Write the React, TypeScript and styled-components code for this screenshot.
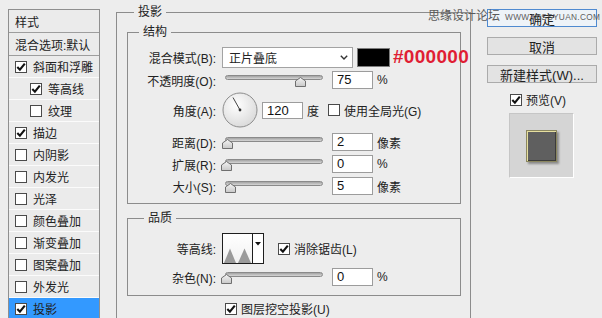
import React from "react";
import styled, { createGlobalStyle } from "styled-components";

const GlobalStyle = createGlobalStyle`
  html, body {
    margin: 0;
    padding: 0;
    background: #ededed;
  }
  body {
    font-family: "Liberation Sans", "Noto Sans CJK SC", sans-serif;
    font-size: 12px;
    color: #222;
  }
`;

type Effect = {
  name: string
  checked?: boolean
  sub?: boolean
  active?: boolean
}

const effects: Effect[] = [
  { name: "斜面和浮雕", checked: true },
  { name: "等高线", checked: true, sub: true },
  { name: "纹理", sub: true },
  { name: "描边", checked: true },
  { name: "内阴影" },
  { name: "内发光" },
  { name: "光泽" },
  { name: "颜色叠加" },
  { name: "渐变叠加" },
  { name: "图案叠加" },
  { name: "外发光" },
  { name: "投影", checked: true, active: true },
]

const Check = ({ checked }: { checked?: boolean }) => (
  <CheckBox>
    {checked && (
      <svg width="10" height="10" viewBox="0 0 10 10">
        <path d="M1.3 5 L3.9 7.7 L8.8 1.6" fill="none" stroke="#111" strokeWidth="2.1" />
      </svg>
    )}
  </CheckBox>
)

const Slider = ({ pos }: { pos: number }) => (
  <SliderWrap>
    <Track />
    <Thumb style={{ left: 1 + pos * 0.987 - 5.5 }}>
      <svg width="11" height="10" viewBox="0 0 11 10">
        <defs>
          <linearGradient id="thumbFill" x1="0" y1="0" x2="0" y2="1">
            <stop offset="0" stopColor="#f4f4f4" />
            <stop offset="1" stopColor="#c8c8c8" />
          </linearGradient>
        </defs>
        <polygon points="0.5,4 5.5,0.5 10.5,4 10.5,9.5 0.5,9.5" fill="url(#thumbFill)" stroke="#6f6f6f" />
      </svg>
    </Thumb>
  </SliderWrap>
)

const Dial = () => (
  <svg width="36" height="36" viewBox="0 0 36 36">
    <defs>
      <radialGradient id="dialFill" cx="0.4" cy="0.35" r="0.7">
        <stop offset="0" stopColor="#ffffff" />
        <stop offset="1" stopColor="#d9d9d9" />
      </radialGradient>
    </defs>
    <circle cx="18" cy="18" r="17" fill="url(#dialFill)" stroke="#8d8d8d" />
    <line x1="18" y1="18" x2="11" y2="5.5" stroke="#444" strokeWidth="1" />
    <circle cx="18" cy="18" r="1.4" fill="#333" />
  </svg>
)

const ContourPicker = () => (
  <ContourBox>
    <ContourCurve>
      <svg width="29" height="29" viewBox="0 0 29 29">
        <polygon points="1,29 7,14.5 13,29" fill="#9a9a9a" />
        <polygon points="15,29 21.5,14.5 28,29" fill="#9a9a9a" />
      </svg>
    </ContourCurve>
    <ContourArrow>
      <svg width="6" height="4" viewBox="0 0 6 4">
        <polygon points="0,0 6,0 3,3.5" fill="#111" />
      </svg>
    </ContourArrow>
  </ContourBox>
)

export default function App() {
  return (
    <Page>
      <GlobalStyle />
      <StylePanel>
        <PanelHeader>样式</PanelHeader>
        <PanelHeader>混合选项:默认</PanelHeader>
        {effects.map(effect => (
          <EffectRow key={effect.name} $sub={effect.sub} $active={effect.active}>
            <Check checked={effect.checked} />
            <EffectName>{effect.name}</EffectName>
          </EffectRow>
        ))}
      </StylePanel>

      <Group>
        <Legend $indent={7}>投影</Legend>
        <SubGroup>
          <Legend $indent={11}>结构</Legend>
          <Rows $top={6} $bottom={7}>
            <Row $h={22}>
              <Label>混合模式(B):</Label>
              <Select>
                <span>正片叠底</span>
                <svg width="8" height="5" viewBox="0 0 8 5">
                  <path d="M0.8 0.8 L4 4 L7.2 0.8" fill="none" stroke="#333" strokeWidth="1.4" />
                </svg>
              </Select>
              <Swatch />
              <HexCode>#000000</HexCode>
            </Row>
            <Row $h={20}>
              <Label>不透明度(O):</Label>
              <Slider pos={75} />
              <ValueInput>75</ValueInput>
              <Unit>%</Unit>
            </Row>
            <Row $h={36} $after={2}>
              <Label>角度(A):</Label>
              <Dial />
              <ValueInput $gap={4} $h={17}>120</ValueInput>
              <Unit>度</Unit>
              <OptionGap $w={9} />
              <Check />
              <OptionText>使用全局光(G)</OptionText>
            </Row>
            <Row $h={20}>
              <Label>距离(D):</Label>
              <Slider pos={2} />
              <ValueInput>2</ValueInput>
              <Unit>像素</Unit>
            </Row>
            <Row $h={20}>
              <Label>扩展(R):</Label>
              <Slider pos={0} />
              <ValueInput>0</ValueInput>
              <Unit>%</Unit>
            </Row>
            <Row $h={20}>
              <Label>大小(S):</Label>
              <Slider pos={4.6} />
              <ValueInput>5</ValueInput>
              <Unit>像素</Unit>
            </Row>
          </Rows>
        </SubGroup>

        <SubGroup $top={6}>
          <Legend $indent={16}>品质</Legend>
          <Rows $top={7} $bottom={8} $gap={3}>
            <Row $h={31}>
              <Label>等高线:</Label>
              <ContourPicker />
              <OptionGap $w={14} />
              <Check checked />
              <OptionText>消除锯齿(L)</OptionText>
            </Row>
            <Row $h={20}>
              <Label>杂色(N):</Label>
              <Slider pos={0} />
              <ValueInput>0</ValueInput>
              <Unit>%</Unit>
            </Row>
          </Rows>
        </SubGroup>

        <KnockoutRow>
          <Check checked />
          <OptionText>图层挖空投影(U)</OptionText>
        </KnockoutRow>
      </Group>

      <ActionPanel>
        <Button $primary>确定</Button>
        <Button>取消</Button>
        <Button>新建样式(W)...</Button>
        <PreviewToggle>
          <Check checked />
          <OptionText>预览(V)</OptionText>
        </PreviewToggle>
        <PreviewBox>
          <PreviewSquare />
        </PreviewBox>
      </ActionPanel>

      <Watermark>
        <WatermarkTitle>思缘设计论坛</WatermarkTitle>
        <WatermarkUrl>WWW.MISSYUAN.COM</WatermarkUrl>
      </Watermark>
    </Page>
  )
}

const Page = styled.div`
  position: relative;
  display: flex;
  align-items: flex-start;
  width: 602px;
  height: 318px;
  overflow: hidden;
  background: #ededed;
`

const StylePanel = styled.div`
  display: flex;
  flex-direction: column;
  flex: none;
  width: 92px;
  margin: 9px 0 0 8px;
  box-sizing: border-box;
  border: 1px solid #8f8f8f;
  border-bottom: none;
  background: #ebebeb;
`

const PanelHeader = styled.div`
  display: flex;
  align-items: center;
  height: 23px;
  padding-left: 6px;
  box-sizing: border-box;
  border-bottom: 1px solid #9d9d9d;
  white-space: nowrap;
`

const EffectRow = styled.div<{ $sub?: boolean, $active?: boolean }>`
  display: flex;
  align-items: center;
  height: 22px;
  padding-left: ${({ $sub }) => $sub ? 21 : 6}px;
  box-sizing: border-box;
  border-bottom: 1px solid ${({ $active }) => $active ? "#3399ff" : "#fbfbfb"};
  background: ${({ $active }) => $active ? "#3399ff" : "transparent"};
`

const EffectName = styled.span`
  margin-left: 6px;
  white-space: nowrap;
`

const CheckBox = styled.span`
  display: inline-flex;
  align-items: center;
  justify-content: center;
  flex: none;
  width: 12px;
  height: 12px;
  box-sizing: border-box;
  border: 1px solid #4a4a4a;
  background: #fff;
`

const Group = styled.fieldset`
  flex: none;
  width: 355px;
  height: 340px;
  min-width: 0;
  margin: 4px 0 0 16px;
  padding: 0 10px;
  box-sizing: border-box;
  border: 1px solid #8c8c8c;
`

const SubGroup = styled.fieldset<{ $top?: number }>`
  width: 334px;
  min-width: 0;
  margin: ${({ $top }) => $top ?? 4}px 0 0 0;
  padding: 0;
  box-sizing: border-box;
  border: 1px solid #8c8c8c;
`

const Legend = styled.legend<{ $indent: number }>`
  margin-left: ${({ $indent }) => $indent}px;
  padding: 0 4px;
  line-height: 16px;
  font-size: 12px;
`

const Rows = styled.div<{ $top: number, $bottom: number, $gap?: number }>`
  display: flex;
  flex-direction: column;
  gap: ${({ $gap }) => $gap ?? 2}px;
  padding: ${({ $top }) => $top}px 0 ${({ $bottom }) => $bottom}px 0;
`

const Row = styled.div<{ $h: number, $after?: number }>`
  display: flex;
  align-items: center;
  height: ${({ $h }) => $h}px;
  margin-bottom: ${({ $after }) => $after ?? 0}px;
`

const Label = styled.label`
  flex: none;
  width: 88px;
  margin-right: 6px;
  text-align: right;
  white-space: nowrap;
`

const Select = styled.div`
  display: flex;
  align-items: center;
  justify-content: space-between;
  flex: none;
  width: 131px;
  height: 21px;
  padding: 0 4px 0 6px;
  box-sizing: border-box;
  border: 1px solid #a3a3a3;
  background: #fff;
  font-size: 12px;
`

const Swatch = styled.div`
  flex: none;
  width: 33px;
  height: 19px;
  margin-left: 4px;
  box-sizing: border-box;
  border: 1px solid #7d7d7d;
  background: #000;
`

const HexCode = styled.span`
  margin-left: 3px;
  font-family: "Liberation Sans", sans-serif;
  font-size: 19px;
  font-weight: bold;
  letter-spacing: 0.3px;
  color: #e01e34;
`

const SliderWrap = styled.div`
  position: relative;
  flex: none;
  width: 98px;
  height: 20px;
  margin-left: 3px;
`

const Track = styled.div`
  position: absolute;
  left: 0;
  right: 0;
  top: 5px;
  height: 5px;
  box-sizing: border-box;
  border: 1px solid #8a8a8a;
  border-radius: 3px;
  background: linear-gradient(#a3a3a3, #d6d6d6);
`

const Thumb = styled.div`
  position: absolute;
  top: 7px;
  width: 11px;
  height: 10px;
  line-height: 0;
`

const ValueInput = styled.div<{ $gap?: number, $h?: number }>`
  flex: none;
  width: 41px;
  height: ${({ $h }) => $h ?? 18}px;
  margin-left: ${({ $gap }) => $gap ?? 9}px;
  padding-left: 4px;
  box-sizing: border-box;
  border: 1px solid #9c9c9c;
  background: #fff;
  font-size: 13px;
  line-height: ${({ $h }) => ($h ?? 18) - 2}px;
  color: #111;
`

const Unit = styled.span`
  margin-left: 4px;
  white-space: nowrap;
`

const OptionGap = styled.span<{ $w: number }>`
  flex: none;
  width: ${({ $w }) => $w}px;
`

const OptionText = styled.span`
  margin-left: 4px;
  white-space: nowrap;
`

const ContourBox = styled.div`
  display: flex;
  flex: none;
  width: 42px;
  height: 31px;
  box-sizing: border-box;
  border: 1px solid #1e1e1e;
  background: #fff;
`

const ContourCurve = styled.div`
  width: 29px;
  height: 29px;
  line-height: 0;
  background: linear-gradient(#ffffff, #f1f1f1);
`

const ContourArrow = styled.div`
  display: flex;
  justify-content: center;
  flex: 1;
  padding-top: 8px;
  border-left: 1px solid #1e1e1e;
  line-height: 0;
`

const KnockoutRow = styled.div`
  display: flex;
  align-items: center;
  height: 13px;
  margin: 6px 0 0 98px;
`

const ActionPanel = styled.div`
  display: flex;
  flex-direction: column;
  flex: none;
  width: 110px;
  margin: 9px 0 0 16px;
`

const Button = styled.div<{ $primary?: boolean }>`
  display: flex;
  align-items: center;
  justify-content: center;
  height: 18px;
  margin-bottom: 10px;
  box-sizing: border-box;
  border: 1px solid ${({ $primary }) => $primary ? "#4f8ad0" : "#ababab"};
  background: ${({ $primary }) => $primary ? "#eef3f8" : "#e3e3e3"};
  font-family: "Liberation Sans", "Noto Sans CJK SC", sans-serif;
  font-size: 13px;
  color: #222;
  white-space: nowrap;
`

const PreviewToggle = styled.div`
  display: flex;
  align-items: center;
  height: 13px;
  margin-left: 23px;
`

const PreviewBox = styled.div`
  display: flex;
  align-items: center;
  justify-content: center;
  width: 65px;
  height: 65px;
  margin: 7px 0 0 22px;
  box-sizing: border-box;
  border: 1px solid;
  border-color: #c6c6c6 #ffffff #ffffff #c6c6c6;
  background: #d5d5d5;
`

const PreviewSquare = styled.div`
  width: 31px;
  height: 32px;
  box-sizing: border-box;
  border: 1px solid #8b8760;
  background: #5f5f5f;
  box-shadow:
    inset 1px 1px 0 #e6dfa0,
    inset -1px -1px 0 #3b3b3b,
    2px 2px 2px rgba(0, 0, 0, 0.35);
`

const Watermark = styled.div`
  position: absolute;
  left: 428px;
  top: 7px;
  display: flex;
  align-items: baseline;
  gap: 5px;
  white-space: nowrap;
  pointer-events: none;
`

const WatermarkTitle = styled.span`
  font-family: "Noto Sans CJK SC", sans-serif;
  font-size: 12px;
  line-height: 16px;
  color: #5a5a5a;
`

const WatermarkUrl = styled.span`
  font-family: "Liberation Sans", sans-serif;
  font-size: 8.3px;
  letter-spacing: 0.3px;
  color: #5e5e5e;
`
